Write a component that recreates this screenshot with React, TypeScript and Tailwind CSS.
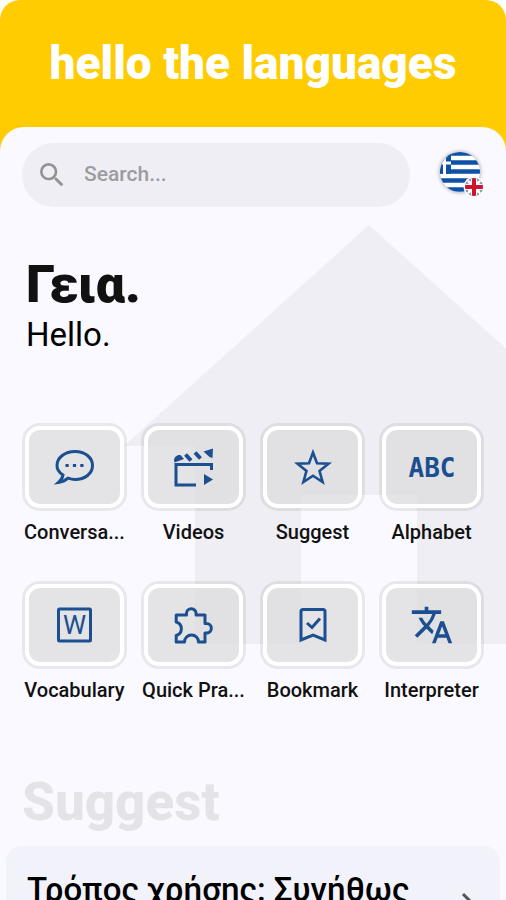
import type { ReactNode } from "react";
import { MdSearch, MdTranslate } from "react-icons/md";

type Shortcut = {
  label: string;
  icon: ReactNode;
};

const shortcuts: Shortcut[] = [
  { label: "Conversa...", icon: <ChatIcon /> },
  { label: "Videos", icon: <ClapperIcon /> },
  { label: "Suggest", icon: <StarIcon /> },
  { label: "Alphabet", icon: <AbcIcon /> },
  { label: "Vocabulary", icon: <WordIcon /> },
  { label: "Quick Pra...", icon: <PuzzleIcon /> },
  { label: "Bookmark", icon: <BookmarkIcon /> },
  { label: "Interpreter", icon: <MdTranslate className="size-11" /> },
];

function ChatIcon() {
  return (
    <svg viewBox="0 0 44 44" className="size-11" fill="none" stroke="currentColor" strokeWidth="3">
      <path d="M10 30C6 27.500 4 24.300 4 20.500 4 12.500 12 6.500 22 6.500s17.500 6 17.500 14-7.500 14-17.500 14c-2.700 0-4.700-.5-7-1.300-2.700 2.400-5.500 3.800-9.500 4.300 2.500-2.200 4-4.700 4.500-7.500Z" />
      <path d="M12.500 20.500h3.200M19.900 20.500h3.200M27.300 20.500h3.200" />
    </svg>
  );
}

function ClapperIcon() {
  return (
    <svg viewBox="0 0 44 44" className="size-11" fill="none" stroke="currentColor" strokeWidth="3">
      <path d="M39.500 25v-5.500H4V40h20" />
      <path d="m13.500 9.500 5.500 6M23 7.500l5.500 6" strokeWidth="4" />
      <path d="M2 15.500c0-3.500 3-6 6.500-5.500l3.500 4-9.500 3.500ZM31.500 6.500 41 3.500l-.5 9.500-3-1Z" fill="currentColor" stroke="none" />
      <path d="M32 29v11l9-5.500Z" fill="currentColor" stroke="none" />
    </svg>
  );
}

function StarIcon() {
  return (
    <svg viewBox="0 0 44 44" className="size-11" fill="none" stroke="currentColor" strokeWidth="2.600">
      <path d="m22 7.500 4 10.700 11.500.5-9 7.200 3.100 11.100L22 30.700 12.400 37l3.100-11.100-9-7.200 11.500-.5Z" />
    </svg>
  );
}

function AbcIcon() {
  return (
    <svg viewBox="0 0 52 44" className="h-11 w-[52px]">
      <text
        x="26"
        y="32"
        textAnchor="middle"
        className="font-['DejaVu_Sans_Mono',monospace] text-[26px] font-bold"
        fill="currentColor"
      >
        ABC
      </text>
    </svg>
  );
}

function WordIcon() {
  return (
    <svg viewBox="0 0 44 44" className="size-11" fill="none" stroke="currentColor" strokeWidth="3">
      <rect x="5.500" y="6" width="32" height="32" rx="1" />
      <text x="21.500" y="31" textAnchor="middle" fontSize="26" fill="currentColor" stroke="none">
        W
      </text>
    </svg>
  );
}

function PuzzleIcon() {
  return (
    <svg viewBox="0 0 44 44" className="size-11" fill="none" stroke="currentColor" strokeWidth="3">
      <path
        strokeLinejoin="round"
        d="M4.200 12h10.300v-1.500a4.800 4.800 0 0 1 9.600 0V12H33v8.500h1.500a4.800 4.800 0 0 1 0 9.600H33V39h-6.500a7 7 0 0 0-14 0H4.200v-6.500a7 7 0 0 0 0-13.500Z"
      />
    </svg>
  );
}

function BookmarkIcon() {
  return (
    <svg viewBox="0 0 44 44" className="size-11" fill="none" stroke="currentColor" strokeWidth="3">
      <path d="M10 37V8.500q0-2 2-2h20q2 0 2 2V37l-12-5Z" />
      <path d="m16 20 5 4.500 8-9" />
    </svg>
  );
}

function FlagIcon() {
  return (
    <svg viewBox="0 0 50 50" className="size-[50px] overflow-visible" aria-hidden="true">
      <defs>
        <clipPath id="greece">
          <circle cx="22" cy="22" r="20" />
        </clipPath>
        <clipPath id="britain">
          <circle cx="36" cy="37" r="9" />
        </clipPath>
      </defs>
      <circle cx="22" cy="22" r="20" fill="#fff" className="drop-shadow-[0_0_2px_#00000066]" />
      <g clipPath="url(#greece)">
        <path d="M0 3.500h50M0 12.500h50M0 21.500h50M0 30.500h50M0 39.500h50" stroke="#0d52a6" strokeWidth="4.500" />
        <path d="M0 0h13v23.700H0Z" fill="#0d52a6" />
        <path d="M0 13h13M6.500 0v24" stroke="#fff" strokeWidth="3" />
      </g>
      <circle cx="36" cy="37" r="10.500" fill="#fff" />
      <g clipPath="url(#britain)">
        <path d="M27 28h18v18H27Z" fill="#28346f" />
        <path d="m27 28 18 18M45 28 27 46" stroke="#fff" strokeWidth="3" />
        <path d="M36 26v22M25 37h22" stroke="#fff" strokeWidth="7" />
        <path d="M36 26v22M25 37h22" stroke="#d0132b" strokeWidth="4" />
      </g>
    </svg>
  );
}

function ShortcutTile({ label, icon }: Shortcut) {
  return (
    <button type="button" className="flex min-w-0 flex-col items-center">
      <span className="block w-full rounded-[18px] border-[3px] border-black/7">
        <span className="flex h-[82px] items-center justify-center rounded-[15px] border-4 border-white bg-[#dcdbde]/75 bg-clip-padding text-[#1c4f8f]">
          {icon}
        </span>
      </span>
      <span className="mt-[9px] text-xl leading-6 font-medium whitespace-nowrap text-[#111]">
        {label}
      </span>
    </button>
  );
}

export default function App() {
  return (
    <div className="h-screen overflow-hidden bg-white font-['Roboto','Noto_Sans',sans-serif] text-black">
      <div className="flex h-full flex-col rounded-t-[20px] bg-[#ffcc02]">
        <header className="flex h-[127px] shrink-0 items-center justify-center">
          <h1 className="text-[46px] font-black whitespace-nowrap text-white">hello the languages</h1>
        </header>

        <main className="relative isolate flex-1 overflow-hidden rounded-t-3xl bg-[#faf9ff]">
          <svg
            viewBox="0 0 382 420"
            className="absolute top-[98px] right-0 -z-10 w-[382px]"
            aria-hidden="true"
          >
            <path d="M245 0 0 221h71v198h106V270h116v149h126V221h71Z" fill="#efeef4" />
          </svg>

          <div className="flex items-center gap-7 pt-4 pr-[18px] pl-[22px]">
            <label className="flex h-16 min-w-0 flex-1 items-center gap-4 rounded-full bg-[#efeef4] px-[14px] text-[#929296]">
              <MdSearch className="size-8 shrink-0" />
              <input
                type="search"
                aria-label="Search"
                placeholder="Search..."
                className="w-full min-w-0 bg-transparent text-[21px] font-medium outline-none placeholder:text-[#9c9ca0]"
              />
            </label>
            <button type="button" aria-label="Change language">
              <FlagIcon />
            </button>
          </div>

          <section className="px-[26px] pt-12">
            <h2 className="text-[52px] leading-[60px] font-black text-[#111]">Γεια.</h2>
            <p className="text-[33px] leading-10">Hello.</p>
          </section>

          <nav className="grid grid-cols-4 gap-x-3.5 gap-y-[37px] px-[22px] pt-[68px]">
            {shortcuts.map((item) => (
              <ShortcutTile key={item.label} {...item} />
            ))}
          </nav>

          <section className="pt-[68px]">
            <h2 className="px-[22px] text-[53px] leading-[64px] font-extrabold text-[#e4e3e8]">
              Suggest
            </h2>
            <a
              href="#usage"
              className="mx-1.5 mt-3 flex items-center justify-between rounded-2xl bg-[#f2f2fa] px-[21px] pt-6 pb-6"
            >
              <span className="pb-6 text-[33px] leading-10 font-medium whitespace-nowrap">
                Τρόπος χρήσης: Συνήθως
              </span>
              <svg viewBox="0 0 24 24" className="size-6 shrink-0" fill="none" stroke="#555" strokeWidth="3">
                <path d="m8 4 8 8-8 8" />
              </svg>
            </a>
          </section>
        </main>
      </div>
    </div>
  );
}
